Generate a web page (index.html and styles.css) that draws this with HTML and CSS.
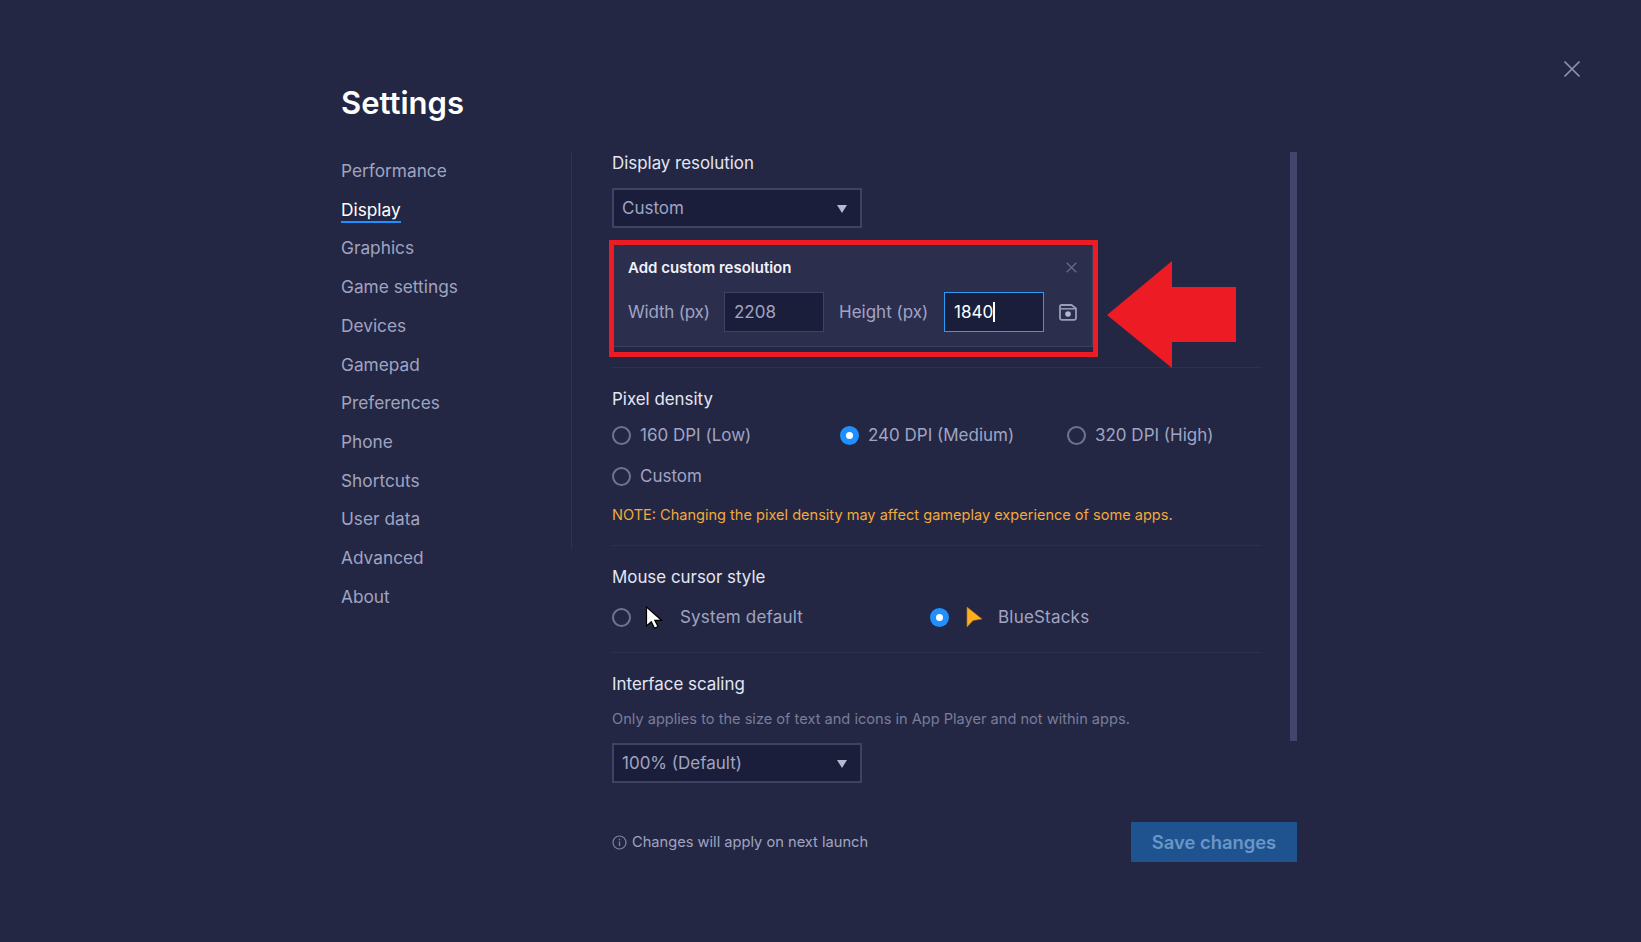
FILE: index.html
```html
<!DOCTYPE html>
<html lang="en">
<head>
    <meta charset="UTF-8">
    <meta name="viewport" content="width=device-width, initial-scale=1.0">
    <title>Settings</title>
    <link rel="stylesheet" href="styles.css">
</head>
<body>
    <button class="close-page" aria-label="Close">
        <svg width="18" height="18" viewBox="0 0 18 18"><path d="M1.5 1.5l15 15M16.5 1.5l-15 15" stroke="#8e92ad" stroke-width="1.7" fill="none"/></svg>
    </button>

    <div class="settings">
        <h1>Settings</h1>

        <div class="settings-body">
            <nav class="side-nav">
                <a>Performance</a>
                <a class="active">Display</a>
                <a>Graphics</a>
                <a>Game settings</a>
                <a>Devices</a>
                <a>Gamepad</a>
                <a>Preferences</a>
                <a>Phone</a>
                <a>Shortcuts</a>
                <a>User data</a>
                <a>Advanced</a>
                <a>About</a>
            </nav>

            <div class="content">
                <section class="section first">
                    <h2>Display resolution</h2>
                    <div class="select"><span>Custom</span><i class="caret"></i></div>

                    <div class="red-box">
                        <div class="custom-panel">
                            <div class="panel-head">
                                <strong>Add custom resolution</strong>
                                <svg width="11" height="11" viewBox="0 0 11 11"><path d="M.7.7l9.6 9.6M10.3.7l-9.6 9.6" stroke="#666a87" stroke-width="1.3" fill="none"/></svg>
                            </div>
                            <div class="panel-row">
                                <label class="w-label">Width (px)</label>
                                <div class="field">2208</div>
                                <label class="h-label">Height (px)</label>
                                <div class="field focus">1840<span class="text-caret"></span></div>
                                <svg class="save-icon" width="18" height="17" viewBox="0 0 18 17">
                                    <path d="M2.5 1h10l4.500 3.500V14a1.800 1.800 0 0 1-1.800 1.800H2.800A1.800 1.800 0 0 1 1 14V2.500A1.500 1.500 0 0 1 2.500 1z" fill="none" stroke="#9a9db8" stroke-width="1.800"/>
                                    <path d="M1.500 4.800h15" stroke="#9a9db8" stroke-width="1.500"/>
                                    <circle cx="9" cy="10" r="2.800" fill="#b4b7cd"/>
                                </svg>
                            </div>
                        </div>
                    </div>
                </section>

                <section class="section density">
                    <h2>Pixel density</h2>
                    <div class="radio-grid">
                        <div class="radio-item"><i class="radio"></i>160 DPI (Low)</div>
                        <div class="radio-item"><i class="radio on"></i>240 DPI (Medium)</div>
                        <div class="radio-item"><i class="radio"></i>320 DPI (High)</div>
                        <div class="radio-item"><i class="radio"></i>Custom</div>
                    </div>
                    <p class="note">NOTE: Changing the pixel density may affect gameplay experience of some apps.</p>
                </section>

                <section class="section cursor-style">
                    <h2>Mouse cursor style</h2>
                    <div class="cursor-row">
                        <div class="cursor-item">
                            <i class="radio"></i>
                            <svg width="18" height="23" viewBox="0 0 18 23"><path d="M1.500 1v19l4.800-4.300 3.200 6.600 3.500-1.700-3.200-6.300h6.700z" fill="#fff" stroke="#000" stroke-width="1.200"/></svg>
                            <span>System default</span>
                        </div>
                        <div class="cursor-item">
                            <i class="radio on"></i>
                            <svg class="bs-cursor" width="18" height="23" viewBox="0 0 18 23"><path d="M2 1v20l6-6.500 9-1.500z" fill="#fdad1d" stroke="#a8761a" stroke-width=".6"/></svg>
                            <span class="bs-label">BlueStacks</span>
                        </div>
                    </div>
                </section>

                <section class="section scaling">
                    <h2>Interface scaling</h2>
                    <p class="hint">Only applies to the size of text and icons in App Player and not within apps.</p>
                    <div class="select"><span>100% (Default)</span><i class="caret"></i></div>
                </section>
            </div>

            <div class="scrollbar"></div>
        </div>

        <div class="footer">
            <div class="apply-note">
                <svg width="15" height="15" viewBox="0 0 15 15"><circle cx="7.500" cy="7.500" r="6.500" fill="none" stroke="#7f839f" stroke-width="1.200"/><path d="M7.500 6.500v4.500M7.500 3.800v1.400" stroke="#7f839f" stroke-width="1.300"/></svg>
                Changes will apply on next launch
            </div>
            <button class="save">Save changes</button>
        </div>
    </div>

    <!-- annotation arrow on top of the screenshot -->
    <svg class="red-arrow" width="130" height="107" viewBox="0 0 130 107"><path d="M0 54L65 0v26h64v55H65v26z" fill="#ed1c24"/></svg>
</body>
</html>
```

FILE: styles.css
```css
* {
    box-sizing: border-box;
    margin: 0;
    padding: 0;
}
body {
    background-color: #232743;
    color: #a0a4c2;
    font-family: Inter, "Open Sans", sans-serif;
    font-size: 17px;
    height: 942px;
    overflow: hidden;
    position: relative;
}
.close-page {
    position: absolute;
    left: 1563px;
    top: 60px;
    width: 18px;
    height: 18px;
    background: none;
    border: none;
}
.close-page svg { display: block; }

.settings {
    width: 956px;
    margin-left: 341px;
    padding-top: 83px;
}
h1 {
    color: #fff;
    font-size: 31px;
    font-weight: 600;
    line-height: 40px;
    margin-bottom: 29px;
}
.settings-body {
    display: flex;
    align-items: flex-start;
    height: 631px;
}

/* left menu */
.side-nav {
    width: 231px;
    height: 396px;
    border-right: 1px solid #2f3350;
    flex-shrink: 0;
    display: flex;
    flex-direction: column;
    align-items: flex-start;
}
.side-nav a {
    display: block;
    flex: 0 0 38.72px;
    font-size: 17.300px;
    line-height: 37px;
    position: relative;
}
.side-nav a.active { color: #fff; }
.side-nav a.active::after {
    content: "";
    position: absolute;
    left: 0;
    right: 0;
    top: 30px;
    height: 2px;
    background: #1e90ff;
}

.content {
    width: 650px;
    margin-left: 40px;
    flex-shrink: 0;
}
.scrollbar {
    width: 7px;
    height: 589px;
    margin-left: 28px;
    background: #42466a;
}
.section { border-bottom: 1px solid #2c3050; }
.section.first { padding-bottom: 10px; }
.section.density { padding: 20px 0; }
.section.cursor-style { padding: 20px 0 24px; }
.section.scaling { padding-top: 20px; border-bottom: none; }
h2 {
    color: #e4e6f2;
    font-size: 16.900px;
    font-weight: 400;
    line-height: 22px;
}

.select {
    width: 250px;
    height: 40px;
    background: #1b1e3b;
    border: 2px solid #3f4262;
    color: #a0a4c2;
    display: flex;
    align-items: center;
    justify-content: space-between;
    padding: 0 13px 0 8px;
    margin-top: 14px;
}
.caret {
    width: 0;
    height: 0;
    border-left: 5.500px solid transparent;
    border-right: 5.500px solid transparent;
    border-top: 8px solid #b6b9cf;
    margin-top: 2px;
}

/* custom resolution panel with the red marker */
.red-box {
    width: 489px;
    height: 117px;
    margin: 12px 0 0 -3px;
    border: 5px solid #ed1c24;
}
.custom-panel {
    width: 479px;
    height: 102px;
    background: #2c2e4e;
    border-right: 1px solid #3b3e5e;
    border-bottom: 1px solid #3b3e5e;
    padding: 11px 14px 0;
}
.panel-head {
    display: flex;
    align-items: center;
    justify-content: space-between;
    height: 22px;
}
.panel-head svg { margin-right: 1px; }
.panel-head strong {
    color: #f0f1f8;
    font-size: 15px;
    font-weight: 600;
}
.panel-row {
    display: flex;
    align-items: center;
    margin-top: 14px;
}
.w-label { width: 96px; letter-spacing: -0.2px; }
.h-label { width: 105px; margin-left: 15px; }
.field {
    width: 100px;
    height: 40px;
    background: #1b1e3b;
    border: 1px solid #3f4262;
    color: #a0a4c2;
    line-height: 38px;
    padding-left: 9px;
}
.field.focus {
    border-color: #2b9bf4;
    color: #fff;
}
.text-caret {
    display: inline-block;
    width: 1.500px;
    height: 20px;
    background: #fff;
    vertical-align: -4px;
}
.save-icon { margin-left: 15px; }

/* radios */
.radio {
    display: block;
    width: 19px;
    height: 19px;
    border-radius: 50%;
    border: 2px solid #6f7390;
    flex-shrink: 0;
}
.radio.on {
    border: none;
    background: #1e90ff;
    position: relative;
}
.radio.on::after {
    content: "";
    position: absolute;
    left: 6px;
    top: 6px;
    width: 7px;
    height: 7px;
    border-radius: 50%;
    background: #fff;
}
.radio-grid {
    display: grid;
    grid-template-columns: 228px 227px 195px;
    row-gap: 19px;
    margin-top: 14px;
}
.radio-item {
    display: flex;
    align-items: center;
    gap: 9px;
    height: 22px;
}
.note {
    color: #f2a93b;
    font-size: 14.550px;
    line-height: 20px;
    margin-top: 18px;
}
.cursor-row {
    display: grid;
    grid-template-columns: 318px 1fr;
    margin-top: 18px;
}
.cursor-item {
    display: flex;
    align-items: center;
    height: 22px;
}
.cursor-item svg { margin-left: 14px; }
.cursor-item span { margin-left: 17px; letter-spacing: 0.2px; }
.cursor-item .bs-cursor { margin-left: 16px; }
.cursor-item .bs-label { margin-left: 15px; }
.hint {
    color: #797d9b;
    font-size: 14.600px;
    line-height: 20px;
    margin-top: 14px;
}
.scaling .select { margin-top: 14px; }

.footer {
    display: flex;
    align-items: center;
    justify-content: space-between;
    margin-left: 271px;
    margin-top: 39px;
}
.apply-note {
    display: flex;
    align-items: center;
    gap: 5px;
    font-size: 14.650px;
}
.save {
    width: 166px;
    height: 40px;
    background: #1f5390;
    border: none;
    color: #6a96c6;
    font-family: inherit;
    font-size: 18.400px;
    font-weight: 600;
}
.red-arrow {
    position: absolute;
    left: 1107px;
    top: 261px;
}
```
